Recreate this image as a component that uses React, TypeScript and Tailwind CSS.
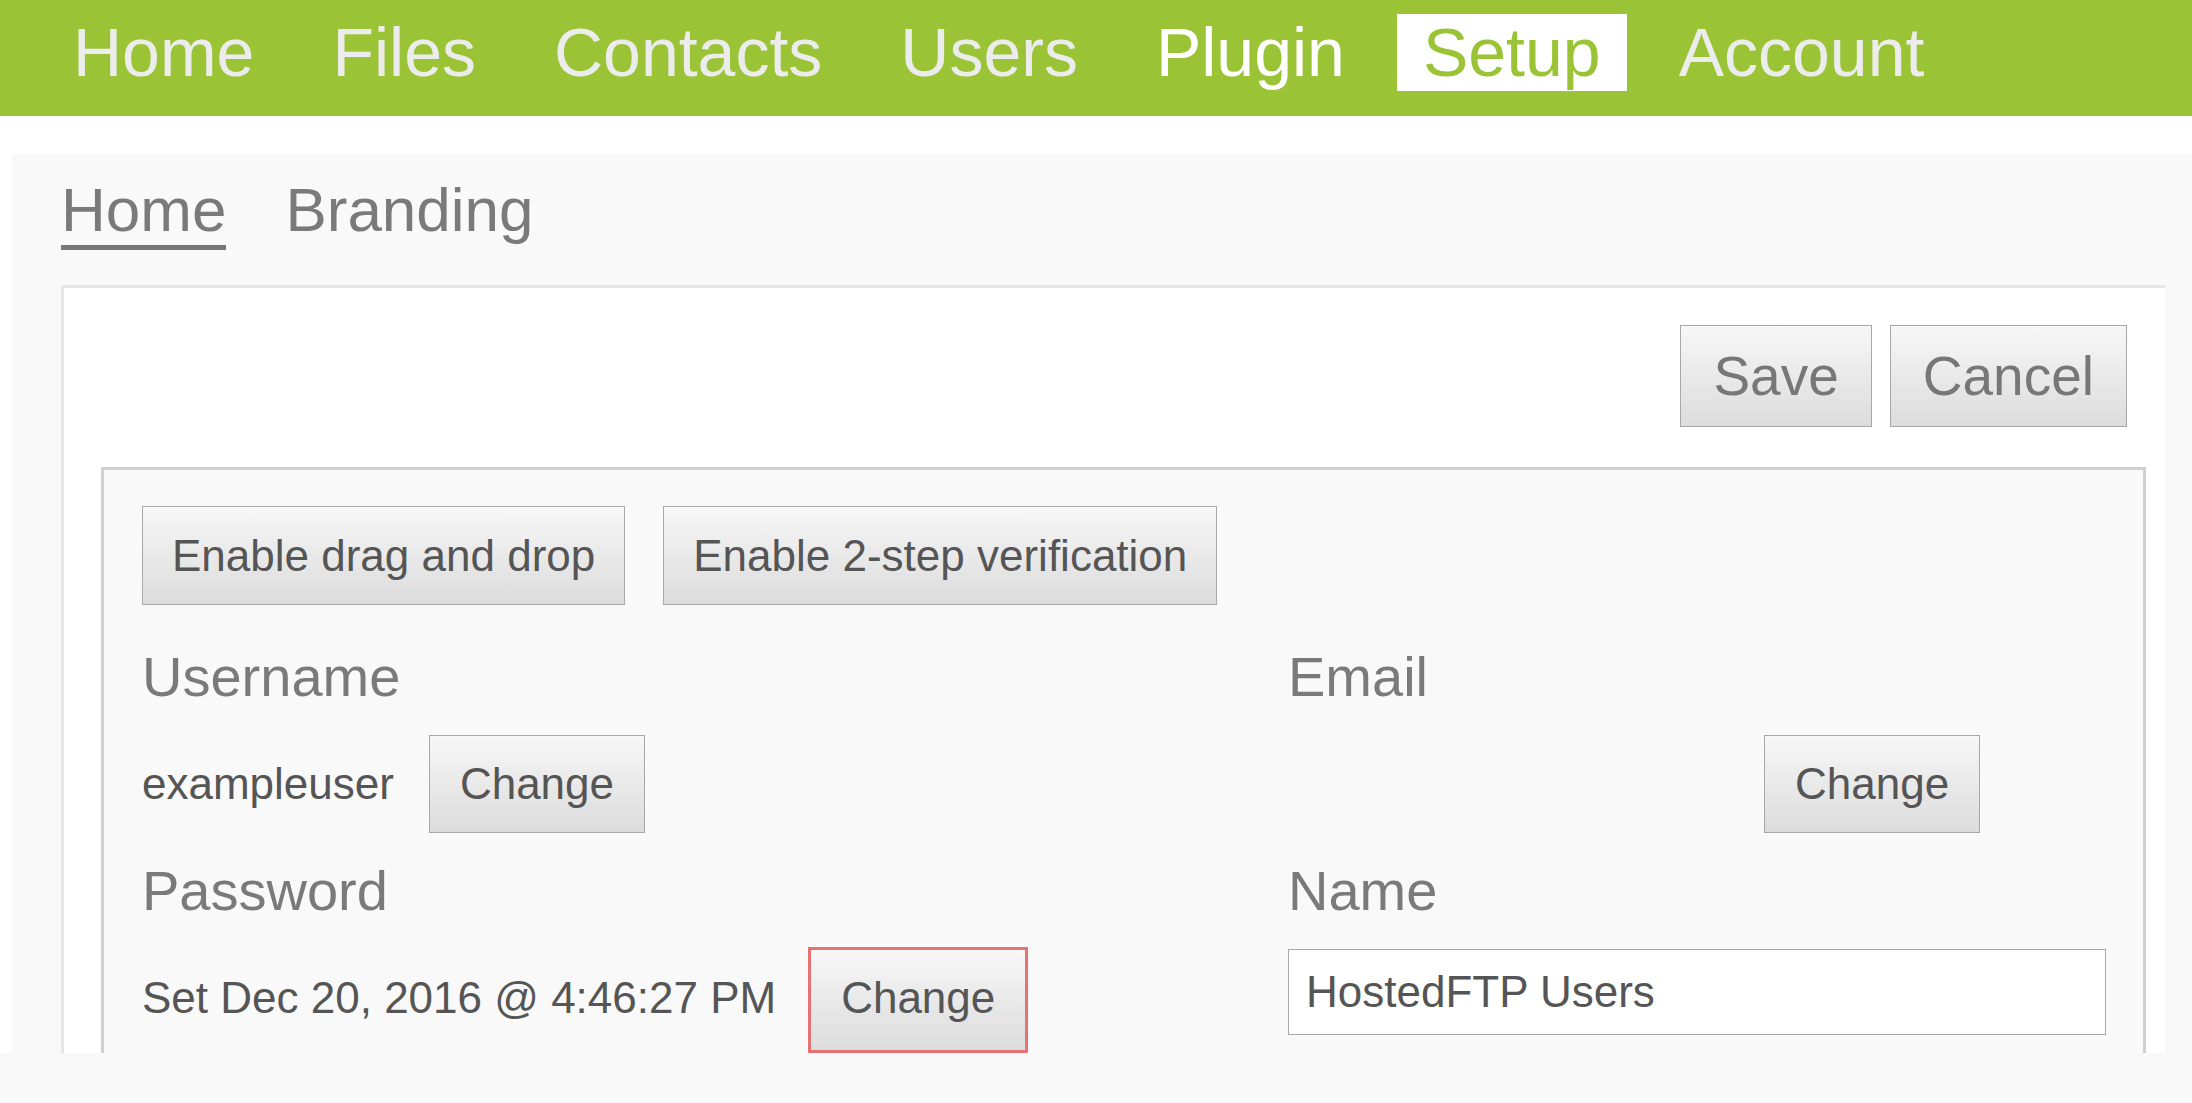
import React from "react";

const NAV = ["Home", "Files", "Contacts", "Users", "Plugin", "Setup", "Account"];

function GrayButton({
  children,
  className = "",
}: {
  children: React.ReactNode;
  className?: string;
}) {
  return (
    <button
      type="button"
      className={`flex shrink-0 items-center justify-center border bg-linear-to-b from-[#f7f7f7] to-[#dcdcdc] whitespace-nowrap ${className}`}
    >
      {children}
    </button>
  );
}

export default function App() {
  return (
    <div className="min-h-screen w-full bg-white font-['Liberation_Sans',Arial,sans-serif]">
      {/* --- Top navigation --- */}
      <nav className="flex h-[116px] items-start gap-[26px] bg-[#9ac435] pt-[14px] pl-[47px]">
        {NAV.map((item) => (
          <a
            key={item}
            className={`h-[77px] px-[26px] text-[68px] leading-[77px] whitespace-nowrap ${
              item === "Setup"
                ? "bg-white text-[#9ac435]"
                : item === "Plugin"
                  ? "text-white"
                  : "text-[#ececec]"
            }`}
          >
            {item}
          </a>
        ))}
      </nav>

      {/* --- Settings panel --- */}
      <div className="mt-[38px] ml-[12px] h-[899px] overflow-hidden bg-[#f9f9f9] pt-[21px] pr-[27px] pl-[49px]">
        <div className="flex gap-[59px] text-[62px] leading-[70px] text-[#7a7a7a]">
          <span className="border-b-[5px] border-[#777777]">Home</span>
          <span>Branding</span>
        </div>

        <div className="mt-[35px] border-t-[3px] border-l-[3px] border-[#e6e6e6] bg-white pt-[37px] pr-[19px] pb-[80px] pl-[37px]">
          <div className="flex justify-end gap-[18px] pr-[19px]">
            <GrayButton className="h-[102px] border-[#a8a8a8] px-[32px] text-[55px] text-[#777777]">
              Save
            </GrayButton>
            <GrayButton className="h-[102px] border-[#a8a8a8] px-[32px] text-[55px] text-[#777777]">
              Cancel
            </GrayButton>
          </div>

          <div className="mt-[40px] border-[3px] border-[#d0d0d0] bg-[#f9f9f9] pt-[36px] pb-[80px] pl-[38px]">
            <div className="flex gap-[38px]">
              <GrayButton className="h-[99px] border-[#a8a8a8] px-[29px] text-[44px] text-[#555555]">
                Enable drag and drop
              </GrayButton>
              <GrayButton className="h-[99px] border-[#a8a8a8] px-[29px] text-[44px] text-[#555555]">
                Enable 2-step verification
              </GrayButton>
            </div>

            <div className="mt-[40px] grid grid-cols-[1146px_818px]">
              {/* Labels row */}
              <div className="text-[56px] leading-[63px] text-[#7a7a7a]">Username</div>
              <div className="text-[56px] leading-[63px] text-[#7a7a7a]">Email</div>

              {/* Values row */}
              <div className="mt-[27px] flex items-center gap-[35px] text-[44px] text-[#555555]">
                <span>exampleuser</span>
                <GrayButton className="h-[98px] border-[#a8a8a8] px-[30px] text-[44px] text-[#555555]">
                  Change
                </GrayButton>
              </div>
              <div className="mt-[27px] flex items-center gap-[39px] text-[44px] text-[#555555]">
                <span className="w-[437px]" />
                <GrayButton className="h-[98px] border-[#a8a8a8] px-[30px] text-[44px] text-[#555555]">
                  Change
                </GrayButton>
              </div>

              {/* Labels row */}
              <div className="mt-[26px] text-[56px] leading-[63px] text-[#7a7a7a]">Password</div>
              <div className="mt-[26px] text-[56px] leading-[63px] text-[#7a7a7a]">Name</div>

              {/* Values row */}
              <div className="mt-[25px] flex items-start gap-[32px] text-[44px] leading-[66px] text-[#555555]">
                <span className="mt-[18px] whitespace-nowrap">Set Dec 20, 2016 @ 4:46:27 PM</span>
                <GrayButton className="h-[106px] items-start border-[3px] border-[#e57373] px-[30px] pt-[15px] text-[44px] leading-[66px] text-[#555555]">
                  Change
                </GrayButton>
              </div>
              <div className="mt-[27px]">
                <input
                  type="text"
                  defaultValue="HostedFTP Users"
                  className="h-[86px] w-[818px] border border-[#a9a9a9] bg-white pl-[17px] text-[44px] text-[#555555] outline-none"
                />
              </div>
            </div>
          </div>
        </div>
      </div>

      <div className="h-[60px] bg-[#f9f9f9]" />
    </div>
  );
}
